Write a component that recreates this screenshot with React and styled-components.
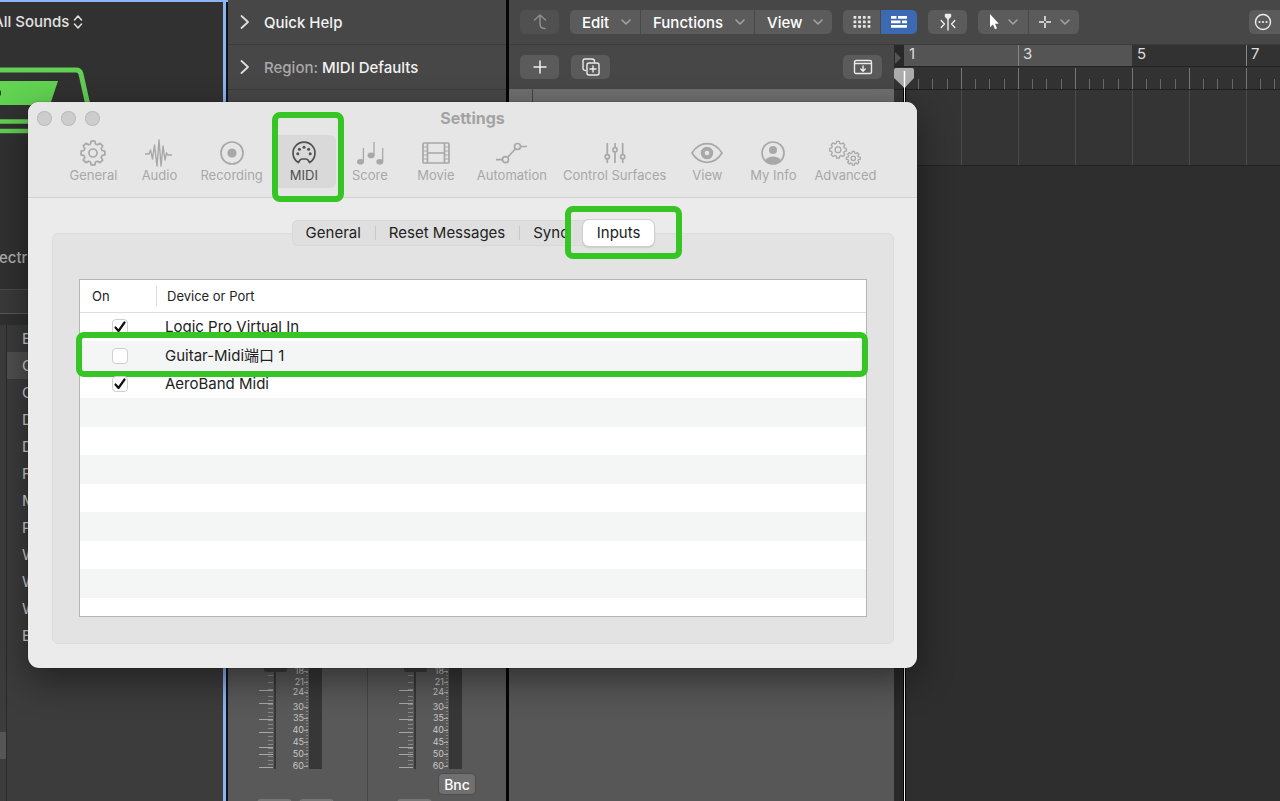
import { useState } from "react";
import styled, { createGlobalStyle, css } from "styled-components";

const GlobalStyle = createGlobalStyle`
  * {
    box-sizing: border-box;
  }
  body {
    margin: 0;
    background: #2e2e2e;
    font-family: Inter, "Liberation Sans", "Noto Sans CJK SC", sans-serif;
  }
  button {
    font-family: inherit;
    border: 0;
    padding: 0;
    margin: 0;
  }
`;

const GREEN = "#37c526";

//outline of a gear around cx, cy
function gearPath(cx, cy, outer, inner) {
  const teeth = 8;
  const step = (Math.PI * 2) / teeth;
  const shape = [
    [-0.34, inner],
    [-0.2, outer],
    [0.2, outer],
    [0.34, inner],
  ];
  const points = [];
  for (let i = 0; i < teeth; i++) {
    shape.forEach(([offset, r]) => {
      const a = i * step - Math.PI / 2 + offset * step;
      points.push(
        `${(cx + Math.cos(a) * r).toFixed(2)} ${(cy + Math.sin(a) * r).toFixed(2)}`
      );
    });
  }
  return `M${points.join("L")}Z`;
}

const icons = {
  General: (
    <>
      <path d={gearPath(16, 14, 12, 9.4)} />
      <circle cx="16" cy="14" r="4" />
    </>
  ),
  Audio: (
    <path
      strokeWidth="1.4"
      d="M2 15h4l1.500-4 2 9 2-14 2.500 21 2-26 2 26 2-20 2 14 1.500-7 1.500 2h4"
    />
  ),
  Recording: (
    <>
      <circle cx="16" cy="14" r="11" />
      <circle cx="16" cy="14" r="4.6" fill="currentColor" stroke="none" />
    </>
  ),
  MIDI: (
    <>
      <path d="M10.4 23.6A11 11 0 1 1 21.6 23.6L20.2 21.2Q19.4 20 18 20H14Q12.6 20 11.8 21.2Z" />
      <g fill="currentColor" stroke="none">
        <circle cx="9.8" cy="14.8" r="1.5" />
        <circle cx="11.4" cy="10.3" r="1.5" />
        <circle cx="16" cy="8.3" r="1.5" />
        <circle cx="20.6" cy="10.3" r="1.5" />
        <circle cx="22.2" cy="14.8" r="1.5" />
      </g>
    </>
  ),
  Score: (
    <>
      <path strokeWidth="1.3" d="M9.4 9v13.5M20 3v13M28.7 9v13.5" />
      <g fill="currentColor" stroke="none">
        <ellipse cx="6.5" cy="22.8" rx="3.5" ry="2.8" />
        <ellipse cx="17.1" cy="16.4" rx="3.5" ry="2.8" />
        <ellipse cx="25.8" cy="22.8" rx="3.5" ry="2.8" />
      </g>
    </>
  ),
  Movie: (
    <>
      <rect x="3" y="4" width="26" height="20" rx="1" />
      <path d="M7.5 4v20M24.5 4v20M7.5 14h17" />
      <path
        strokeWidth="1.1"
        d="M3 8h4.5M3 12h4.5M3 16h4.5M3 20h4.5M24.5 8H29M24.5 12H29M24.5 16H29M24.5 20H29"
      />
    </>
  ),
  Automation: (
    <>
      <circle cx="9.5" cy="20.7" r="3" />
      <circle cx="21.5" cy="7.5" r="3" />
      <path d="M0 20.7h6.5M11.5 18.5l8-8.8M24.5 7.5H31" />
    </>
  ),
  "Control Surfaces": (
    <>
      <path d="M8.3 4v11.5M8.3 20v4M16 4v4.5M16 13v11M23.7 4v11.5M23.7 20v4" />
      <circle cx="8.3" cy="17.7" r="2.1" />
      <circle cx="16" cy="10.7" r="2.1" />
      <circle cx="23.7" cy="17.7" r="2.1" />
    </>
  ),
  View: (
    <>
      <path d="M1 14C5 7.6 10 4.7 16 4.7S27 7.6 31 14C27 20.4 22 23.3 16 23.3S5 20.4 1 14Z" />
      <circle cx="16" cy="14" r="4.3" strokeWidth="4" />
    </>
  ),
  "My Info": (
    <>
      <circle cx="16" cy="14" r="11" />
      <circle cx="16" cy="11" r="4" fill="currentColor" stroke="none" />
      <path
        d="M8 21.3Q11 17.6 16 17.6T24 21.3Q21 24.8 16 24.8T8 21.3Z"
        fill="currentColor"
        stroke="none"
      />
    </>
  ),
  Advanced: (
    <g strokeWidth="1.3">
      <path d={gearPath(9, 10.7, 8.4, 6.6)} />
      <circle cx="9" cy="10.7" r="2.9" />
      <path d={gearPath(24.3, 19.3, 7, 5.3)} />
      <circle cx="24.3" cy="19.3" r="2.2" />
    </g>
  ),
};

const initialPorts = [
  { id: 1, name: "Logic Pro Virtual In", on: true },
  { id: 2, name: "Guitar-Midi端口 1", on: false, marked: true },
  { id: 3, name: "AeroBand Midi", on: true },
];
const emptyRows = [4, 5, 6, 7, 8, 9, 10, 11];
const tabs = ["General", "Reset Messages", "Sync", "Inputs"];
const patches = ["E", "C", "C", "D", "D", "F", "M", "P", "W", "W", "W", "E"];

function Chevron() {
  return (
    <svg width="10" height="6" viewBox="0 0 10 6" fill="none" stroke="#a2a2a2" strokeWidth="1.6" strokeLinecap="round" strokeLinejoin="round">
      <path d="M1 1l4 4 4-4" />
    </svg>
  );
}

function Disclosure() {
  return (
    <svg width="10" height="14" viewBox="0 0 10 14" fill="none" stroke="#dedede" strokeWidth="1.8" strokeLinecap="round" strokeLinejoin="round">
      <path d="M1.5 1l6.5 6-6.5 6" />
    </svg>
  );
}

function Library() {
  return (
    <StyledLibrary>
      <StyledSounds>
        All Sounds
        <svg width="10" height="14" viewBox="0 0 10 14" fill="none" stroke="#e0e0e0" strokeWidth="1.5" strokeLinecap="round" strokeLinejoin="round">
          <path d="M1.5 5L5 1l3.5 4M1.5 9L5 13l3.5-4" />
        </svg>
      </StyledSounds>
      <svg width="100" height="100" viewBox="0 0 100 100">
        <path d="M0 29H76q4 0 5 4L95 96" fill="none" stroke="#62cf55" strokeWidth="5" />
        <path d="M0 40H58L50 64H0Z" fill="#62d352" />
        <circle cx="-3" cy="52" r="4" fill="#123a10" />
        <path d="M0 80.500H90M0 90H90" stroke="#62cf55" strokeWidth="4.5" />
      </svg>
      <StyledPatchName>ectri</StyledPatchName>
      <StyledLibraryBar />
      <StyledLists>
        <StyledLeftList>
          <StyledLeftSelected />
        </StyledLeftList>
        <StyledPatches>
          {patches.map((patch, i) => (
            <StyledPatch key={i} $selected={i === 1}>
              {patch}
            </StyledPatch>
          ))}
        </StyledPatches>
      </StyledLists>
    </StyledLibrary>
  );
}

const meterLabels = [
  [18, 11],
  [21, 22],
  [24, 32],
  [30, 47],
  [35, 58],
  [40, 70],
  [45, 82],
  [50, 94],
  [60, 106],
];
const faderTicks = [30, 43, 59, 72, 87, 94, 107];

//fader scale and level meter of one channel
function Fader() {
  const minor = [];
  for (let y = 15; y < 107; y += y < 30 ? 7 : 4) minor.push(y);
  const fine = [];
  for (let y = 12; y < 108; y += 3) fine.push(y);
  return (
    <svg width="138" height="110" viewBox="0 0 138 110">
      <g stroke="#a8a8a8" strokeWidth="1">
        {faderTicks.map((y) => (
          <path key={y} d={`M31 ${y + 0.5}h14`} />
        ))}
        {minor.map((y) => (
          <path key={y} d={`M40 ${y + 0.5}h5`} opacity="0.6" />
        ))}
        {fine.map((y) => (
          <path key={y} d={`M78 ${y + 0.5}h2`} opacity="0.6" />
        ))}
        {meterLabels.map(([label, y]) => (
          <path key={label} d={`M76 ${y + 0.5}h4`} />
        ))}
      </g>
      <rect x="46" y="0" width="2" height="109" fill="#383838" />
      <rect x="36" y="0" width="23" height="12" rx="2" fill="#3c3c3c" />
      <rect x="81" y="0" width="13" height="109" fill="#373737" />
      <g fill="#c6c6c6" fontSize="9" textAnchor="end">
        {meterLabels.map(([label, y]) => (
          <text key={label} x="76" y={y + 3}>
            {label}
          </text>
        ))}
      </g>
    </svg>
  );
}

function Inspector() {
  return (
    <StyledInspector>
      <StyledInspectorRow>
        <Disclosure />
        <span>Quick Help</span>
      </StyledInspectorRow>
      <StyledInspectorRow>
        <Disclosure />
        <span>
          <StyledMuted>Region:</StyledMuted> MIDI Defaults
        </span>
      </StyledInspectorRow>
      <StyledStrips>
        <StyledStrip>
          <Fader />
          <StyledBounceRow />
          <StyledStripButtons>
            <StyledStripButton aria-label="Mute" />
            <StyledStripButton aria-label="Solo" />
          </StyledStripButtons>
        </StyledStrip>
        <StyledStrip>
          <Fader />
          <StyledBounceRow>
            <StyledBounce>Bnc</StyledBounce>
          </StyledBounceRow>
          <StyledStripButtons>
            <StyledStripButton aria-label="Mute" />
          </StyledStripButtons>
        </StyledStrip>
      </StyledStrips>
    </StyledInspector>
  );
}

function TracksToolbar() {
  return (
    <StyledToolbar>
      <StyledTool aria-label="Back" $dim>
        <svg width="16" height="18" viewBox="0 0 16 18" fill="none" stroke="#8d8d8d" strokeWidth="1.5" strokeLinecap="round" strokeLinejoin="round">
          <path d="M2.5 7L8 2l5.500 5M8 2v9q0 4.500 5 4.500" />
        </svg>
      </StyledTool>
      <StyledToolGroup>
        <StyledMenuButton $width={70}>Edit<Chevron /></StyledMenuButton>
        <StyledMenuButton $width={113}>Functions<Chevron /></StyledMenuButton>
        <StyledMenuButton $width={77}>View<Chevron /></StyledMenuButton>
      </StyledToolGroup>
      <StyledToolGroup>
        <StyledTool $width={37} aria-label="Live loops">
          <svg width="18" height="14" viewBox="0 0 18 14" fill="#e6e6e6">
            {[0, 1, 2].map((row) =>
              [0, 1, 2, 3].map((col) => (
                <rect key={`${row}-${col}`} x={0.5 + col * 4.7} y={1 + row * 4.5} width="2.800" height="2.800" rx="0.500" />
              ))
            )}
          </svg>
        </StyledTool>
        <StyledTool $width={36} $active aria-label="Tracks view">
          <svg width="18" height="14" viewBox="0 0 18 14" fill="#fff">
            <path d="M1 1h5.500v2.800H1zM8 1h9v2.800H8zM1 5.500h9.500v2.800H1zM12 5.500h5v2.800h-5zM1 10h16v2.800H1z" />
          </svg>
        </StyledTool>
      </StyledToolGroup>
      <StyledTool aria-label="Catch playhead">
        <svg width="16" height="18" viewBox="0 0 16 18" fill="none" stroke="#ececec" strokeWidth="1.400" strokeLinecap="round" strokeLinejoin="round">
          <path d="M1.200 7.500l3.200 3.500-3.200 3.500M14.800 7.500L11.600 11l3.200 3.500M8 4v13" />
          <path d="M5.500 1.500h5v2L8 6 5.500 3.500z" fill="#ececec" />
        </svg>
      </StyledTool>
      <StyledToolGroup>
        <StyledTool $width={50} aria-label="Pointer tool">
          <svg width="12" height="18" viewBox="0 0 12 18">
            <path d="M2 1v13.200l3-2.700 2 4.700 2-.9-2-4.500h3.800z" fill="#fff" />
          </svg>
          <Chevron />
        </StyledTool>
        <StyledTool $width={50} aria-label="Marquee tool">
          <svg width="14" height="14" viewBox="0 0 14 14" stroke="#f0f0f0" strokeWidth="1.500">
            <path d="M7 1v5M7 8v5M1 7h5M8 7h5" />
          </svg>
          <Chevron />
        </StyledTool>
      </StyledToolGroup>
      <StyledMore aria-label="More">
        <svg width="18" height="18" viewBox="0 0 18 18" fill="none" stroke="#ececec" strokeWidth="1.400">
          <circle cx="9" cy="9" r="7.500" />
          <g fill="#ececec" stroke="none">
            <circle cx="5.500" cy="9" r="1.100" />
            <circle cx="9" cy="9" r="1.100" />
            <circle cx="12.500" cy="9" r="1.100" />
          </g>
        </svg>
      </StyledMore>
    </StyledToolbar>
  );
}

const barLines = [67, 124, 181, 238, 295, 352, 409, 466];

//bar and beat ticks under the bar numbers
function Beats() {
  return (
    <svg width="480" height="22" viewBox="0 0 480 22" stroke="#777">
      {[10, ...barLines].map((x) => (
        <g key={x}>
          {x > 10 && <path d={`M${x + 0.5} 1v21`} />}
          <path d={`M${x + 14.5} 12v10M${x + 28.5} 12v10M${x + 43.5} 12v10`} opacity="0.8" />
        </g>
      ))}
    </svg>
  );
}

function Tracks() {
  return (
    <StyledTracks>
      <TracksToolbar />
      <StyledTracksBody>
        <StyledHeaders>
          <StyledHeaderTools>
            <StyledTool aria-label="Add track">
              <svg width="16" height="16" viewBox="0 0 16 16" stroke="#f2f2f2" strokeWidth="1.500" strokeLinecap="round">
                <path d="M8 2v12M2 8h12" />
              </svg>
            </StyledTool>
            <StyledTool aria-label="Duplicate track">
              <svg width="18" height="18" viewBox="0 0 18 18" fill="none" stroke="#ececec" strokeWidth="1.400" strokeLinecap="round">
                <rect x="5" y="5" width="12" height="12" rx="2" />
                <path d="M3.500 12.500Q1 12.500 1 10V3Q1 1 3 1h7q2.500 0 2.500 2.500M11 8v6M8 11h6" />
              </svg>
            </StyledTool>
            <StyledPushed>
              <StyledTool aria-label="Global tracks">
                <svg width="20" height="16" viewBox="0 0 20 16" fill="none" stroke="#ececec" strokeWidth="1.400" strokeLinecap="round">
                  <rect x="1.500" y="1.500" width="17" height="13" rx="1.500" />
                  <path d="M2 4.500h16M10 7v5M7.800 10l2.200 2.200 2.200-2.200" />
                </svg>
              </StyledTool>
            </StyledPushed>
          </StyledHeaderTools>
          <StyledHeaderTop />
        </StyledHeaders>
        <StyledTimeline>
          <StyledNumbers>
            <StyledGutter>
              <svg width="8" height="12" viewBox="0 0 8 12">
                <path d="M1 0l6 6-6 6z" fill="#555" />
              </svg>
            </StyledGutter>
            <StyledBar $cycle>1</StyledBar>
            <StyledBar $cycle $line>3</StyledBar>
            <StyledBar>5</StyledBar>
            <StyledBar $line>7</StyledBar>
            <StyledBar />
          </StyledNumbers>
          <StyledBeats>
            <Beats />
          </StyledBeats>
          <StyledLane>
            <svg width="480" height="75" viewBox="0 0 480 75" stroke="#4b4b4b">
              {barLines.map((x) => (
                <path key={x} d={`M${x + 0.5} 0v75`} />
              ))}
            </svg>
          </StyledLane>
          <StyledPlayhead>
            <svg width="20" height="20" viewBox="0 0 20 20">
              <path d="M2 0h16q2 0 2 2v8L10.500 20 0 10V2q0-2 2-2z" fill="#acacac" />
              <path d="M10.500 3v17" stroke="#fff" strokeWidth="1.500" />
            </svg>
          </StyledPlayhead>
        </StyledTimeline>
      </StyledTracksBody>
    </StyledTracks>
  );
}

function PortsTable() {
  const [ports, setPorts] = useState(initialPorts);

  function toggle(id) {
    setPorts(ports.map((p) => (p.id === id ? { ...p, on: !p.on } : p)));
  }

  return (
    <StyledTable>
      <thead>
        <tr>
          <StyledTh $on>On</StyledTh>
          <StyledTh>Device or Port</StyledTh>
        </tr>
      </thead>
      <tbody>
        {ports.map((port) => (
          <StyledRow key={port.id}>
            <StyledTd>
              <StyledCheck>
                <input
                  type="checkbox"
                  id={`port-${port.id}`}
                  checked={port.on}
                  onChange={() => toggle(port.id)}
                />
                {port.on && (
                  <svg width="16" height="16" viewBox="0 0 16 16" fill="none" stroke="#111" strokeWidth="2.200" strokeLinecap="round" strokeLinejoin="round">
                    <path d="M3.500 8.500l3 3.500 6-8.500" />
                  </svg>
                )}
              </StyledCheck>
            </StyledTd>
            <StyledTd $marked={port.marked}>
              <label htmlFor={`port-${port.id}`}>{port.name}</label>
            </StyledTd>
          </StyledRow>
        ))}
        {emptyRows.map((n) => (
          <StyledRow key={n} $short={n === 11}>
            <StyledTd />
            <StyledTd />
          </StyledRow>
        ))}
      </tbody>
    </StyledTable>
  );
}

function SettingsWindow() {
  const [pane, setPane] = useState("MIDI");
  const [tab, setTab] = useState("Inputs");
  return (
    <StyledWindow>
      <StyledTitleBar>
        <StyledLights>
          <StyledLight aria-label="Close" />
          <StyledLight aria-label="Minimize" />
          <StyledLight aria-label="Zoom" />
        </StyledLights>
        <StyledTitle>Settings</StyledTitle>
      </StyledTitleBar>
      <StyledPanes>
        {Object.keys(icons).map((name) => (
          <StyledPane
            key={name}
            $active={name === pane}
            $marked={name === "MIDI"}
            onClick={() => setPane(name)}
          >
            <svg width="32" height="28" viewBox="0 0 32 28" fill="none" stroke="currentColor" strokeWidth="1.700" strokeLinejoin="round">
              {icons[name]}
            </svg>
            {name}
          </StyledPane>
        ))}
      </StyledPanes>
      <StyledContent>
        <StyledTabs>
          {tabs.map((name) => (
            <StyledTab
              key={name}
              $active={name === tab}
              $marked={name === "Inputs"}
              onClick={() => setTab(name)}
            >
              {name}
            </StyledTab>
          ))}
        </StyledTabs>
        <StyledGroup>
          <PortsTable />
        </StyledGroup>
      </StyledContent>
    </StyledWindow>
  );
}

export default function App() {
  return (
    <>
      <GlobalStyle />
      <StyledDesktop>
        <Library />
        <Inspector />
        <Tracks />
        <SettingsWindow />
      </StyledDesktop>
    </>
  );
}

const StyledDesktop = styled.main`
  position: relative;
  display: grid;
  grid-template-columns: 228px 281px minmax(0, 1fr);
  min-height: 100vh;
  overflow: hidden;
`;

//library
const StyledLibrary = styled.section`
  display: flex;
  flex-direction: column;
  background: #313131;
  border-top: 2px solid #8db4f5;
  box-shadow: inset -2px 0 #0b1320, inset -5px 0 #8fb3ea;
  padding-right: 5px;
  overflow: hidden;
`;

const StyledSounds = styled.div`
  display: flex;
  align-items: center;
  gap: 4px;
  height: 39px;
  margin-left: -7px;
  font-size: 15px;
  font-weight: 500;
  color: #e2e2e2;
`;

const StyledPatchName = styled.div`
  height: 148px;
  padding-top: 107px;
  margin-left: -1px;
  font-size: 15px;
  font-weight: 500;
  line-height: 20px;
  color: #b0b0b0;
`;

const StyledLibraryBar = styled.div`
  height: 36px;
  background: #3a3a3a;
  border-top: 1px solid #4a4a4a;
  border-bottom: 11px solid #303030;
  box-shadow: inset 0 -1px #5a5a5a;
`;

const StyledLists = styled.div`
  display: flex;
  flex: 1;
  background: #3c3c3c;
`;

const StyledLeftList = styled.div`
  width: 7px;
  border-right: 1px solid #2a2a2a;
  padding-top: 407px;
`;

const StyledLeftSelected = styled.div`
  height: 27px;
  background: #555;
`;

const StyledPatches = styled.ul`
  flex: 1;
  margin: 0;
  padding: 0;
  list-style: none;
`;

const StyledPatch = styled.li`
  padding-left: 15px;
  font-size: 15px;
  line-height: 27px;
  color: #d5d5d5;
  background: ${(props) => (props.$selected ? "#505050" : "none")};
`;

//inspector
const StyledInspector = styled.section`
  display: flex;
  flex-direction: column;
  background: #474747;
  border-right: 3px solid #050505;
`;

const StyledInspectorRow = styled.div`
  display: flex;
  align-items: center;
  gap: 14px;
  height: 45px;
  padding-left: 12px;
  border-bottom: 1px solid #3b3b3b;
  font-size: 15px;
  font-weight: 500;
  color: #f2f2f2;
`;

const StyledMuted = styled.span`
  color: #a9a9a9;
`;

const StyledStrips = styled.div`
  display: flex;
  flex: 1;
  align-items: stretch;
  margin-top: 60px;
  background: #595959;
`;

const StyledStrip = styled.div`
  flex: 1;
  display: flex;
  flex-direction: column;
  justify-content: flex-end;
  & + & {
    border-left: 1px solid #464646;
  }
`;

const StyledBounceRow = styled.div`
  display: flex;
  justify-content: flex-end;
  height: 29px;
  padding: 4px 31px 0 0;
`;

const StyledBounce = styled.button`
  width: 36px;
  height: 20px;
  border-radius: 4px;
  background: #707070;
  box-shadow: 0 0 0 1px #4d4d4d;
  color: #fff;
  font-size: 14px;
  font-weight: 500;
`;

const StyledStripButtons = styled.div`
  display: flex;
  gap: 7px;
  height: 2px;
  padding-left: 29px;
  overflow: hidden;
`;

const StyledStripButton = styled.button`
  width: 35px;
  height: 20px;
  border-radius: 4px;
  background: #757575;
`;

//tracks area
const StyledTracks = styled.section`
  display: flex;
  flex-direction: column;
  min-width: 0;
`;

const StyledToolbar = styled.div`
  display: flex;
  align-items: center;
  gap: 11px;
  height: 45px;
  padding-left: 11px;
  background: #474747;
  border-bottom: 1px solid #3b3b3b;
`;

const StyledTool = styled.button`
  display: flex;
  flex: none;
  align-items: center;
  justify-content: center;
  gap: 8px;
  width: ${(props) => props.$width || 39}px;
  height: 24px;
  border-radius: 5px;
  background: ${(props) => (props.$active ? "#3b6ab3" : "#5b5b5b")};
  ${(props) =>
    props.$dim &&
    css`
      background: #505050;
    `}
`;

const StyledToolGroup = styled.div`
  display: flex;
  flex: none;
  gap: 1px;
  border-radius: 5px;
  background: #484848;
  overflow: hidden;
  > button {
    border-radius: 0;
  }
`;

const StyledMenuButton = styled.button`
  display: flex;
  align-items: center;
  justify-content: space-between;
  width: ${(props) => props.$width}px;
  height: 24px;
  padding: 0 9px 0 12px;
  background: #5b5b5b;
  color: #fff;
  font-size: 15px;
  font-weight: 500;
`;

const StyledMore = styled(StyledTool)`
  width: 31px;
  margin-left: auto;
  justify-content: flex-start;
  padding-left: 5px;
  border-radius: 5px 0 0 5px;
`;

const StyledTracksBody = styled.div`
  display: flex;
  flex: 1;
`;

const StyledHeaders = styled.div`
  width: 385px;
  flex: none;
  background: #575757;
`;

const StyledHeaderTools = styled.div`
  display: flex;
  align-items: center;
  gap: 12px;
  height: 44px;
  padding: 0 12px 0 11px;
  background: #474747;
`;

const StyledPushed = styled.div`
  margin-left: auto;
`;

const StyledHeaderTop = styled.div`
  height: 75px;
  margin-left: 23px;
  background: #6f6f6f;
  border-left: 1px solid #444;
  box-shadow: -23px 0 #6f6f6f;
`;

const StyledTimeline = styled.div`
  position: relative;
  flex: 1;
  min-width: 0;
  overflow: hidden;
  background: #2e2e2e;
  box-shadow: inset 10px 0 #282828;
`;

const StyledNumbers = styled.div`
  display: flex;
  height: 22px;
  border-bottom: 1px solid #222;
  background: #323232;
`;

const StyledGutter = styled.div`
  flex: none;
  width: 10px;
  padding-top: 3px;
  background: #282828;
`;

const StyledBar = styled.div`
  flex: none;
  width: 114px;
  padding-left: 4px;
  font-size: 15px;
  line-height: 18px;
  color: #dedede;
  background: ${(props) => (props.$cycle ? "#545454" : "#323232")};
  border-left: 1px solid ${(props) => (props.$line ? "#858585" : "transparent")};
`;

const StyledBeats = styled.div`
  height: 23px;
  background: #323232;
  border-bottom: 1px solid #1f1f1f;
`;

const StyledLane = styled.div`
  height: 76px;
  background: #343434;
  border-bottom: 1px solid #232323;
`;

const StyledPlayhead = styled.div`
  position: absolute;
  top: 23px;
  bottom: 0;
  left: 0;
  background: linear-gradient(#f4f4f4, #f4f4f4) 10px 18px / 1px 100% no-repeat,
    linear-gradient(#000, #000) 9px 18px / 3px 100% no-repeat;
`;

//settings window
const StyledWindow = styled.section`
  position: absolute;
  top: 102px;
  left: 28px;
  right: 363px;
  min-width: 850px;
  border-radius: 11px;
  background: #ebebeb;
  box-shadow: 0 0 1px #000, 0 12px 36px rgba(0, 0, 0, 0.45);
`;

const StyledTitleBar = styled.header`
  display: grid;
  grid-template-columns: 1fr auto 1fr;
  align-items: center;
  height: 32px;
  border-radius: 11px 11px 0 0;
  background: #e6e6e6;
`;

const StyledLights = styled.div`
  display: flex;
  gap: 9px;
  padding-left: 9px;
`;

const StyledLight = styled.button`
  width: 15px;
  height: 15px;
  border-radius: 50%;
  background: #cdcdcd;
  box-shadow: inset 0 0 0 1px #bdbdbd;
`;

const StyledTitle = styled.h1`
  margin: 0;
  font-size: 16px;
  font-weight: 700;
  line-height: 20px;
  color: #a3a3a3;
`;

const StyledPanes = styled.nav`
  display: flex;
  justify-content: center;
  gap: 2px;
  height: 64px;
  padding-top: 1px;
  background: #e6e6e6;
  border-bottom: 1px solid #d2d2d2;
`;

//ring drawn around a control
const marker = css`
  position: absolute;
  content: "";
  border: 6px solid ${GREEN};
  border-radius: 8px;
  pointer-events: none;
`;

const StyledPane = styled.button`
  position: relative;
  display: flex;
  flex-direction: column;
  align-items: center;
  min-width: 64px;
  height: 53px;
  padding: 4px 7px 0;
  border-radius: 6px;
  background: ${(props) => (props.$active ? "#d9d9d9" : "none")};
  color: ${(props) => (props.$active ? "#505050" : "#a8a8a8")};
  font-size: 13px;
  line-height: 17px;
  white-space: nowrap;
  ${(props) =>
    props.$marked &&
    css`
      &::after {
        ${marker}
        top: -23px;
        right: -8px;
        bottom: -14px;
        left: 0;
      }
    `}
`;

const StyledContent = styled.div`
  display: flex;
  flex-direction: column;
  align-items: center;
  padding: 22px 23px 24px 24px;
`;

const StyledTabs = styled.div`
  position: relative;
  z-index: 1;
  display: flex;
  margin-bottom: -13px;
  border-radius: 6px;
  background: #dfdfdf;
  box-shadow: inset 0 0 0 1px #d8d8d8;
`;

const StyledTab = styled.button`
  position: relative;
  height: 26px;
  padding: 0 14px;
  border-radius: 6px;
  background: none;
  color: #222;
  font-size: 15px;
  line-height: 26px;
  & + &::before {
    position: absolute;
    top: 6px;
    bottom: 6px;
    left: 0;
    width: 1px;
    background: #c8c8c8;
    content: "";
  }
  ${(props) =>
    props.$active &&
    css`
      background: #fff;
      box-shadow: 0 0 0 1px #cfcfcf, 0 1px 2px rgba(0, 0, 0, 0.3);
      & + &::before,
      &&::before {
        display: none;
      }
    `}
  ${(props) =>
    props.$marked &&
    css`
      &::after {
        ${marker}
        top: -14px;
        right: -28px;
        bottom: -13px;
        left: -18px;
      }
    `}
`;

const StyledGroup = styled.div`
  width: 100%;
  padding: 45px 26px 26px;
  border: 1px solid #dcdcdc;
  border-radius: 6px;
  background: #e3e3e3;
`;

const StyledTable = styled.table`
  width: 100%;
  border: 1px solid #b5b5b5;
  border-spacing: 0;
  background: #fff;
  table-layout: fixed;
  color: #222;
`;

const StyledTh = styled.th`
  width: ${(props) => (props.$on ? "77px" : "auto")};
  height: 33px;
  padding: 0 0 0 ${(props) => (props.$on ? 12 : 10)}px;
  border-bottom: 1px solid #dedede;
  background: ${(props) =>
    props.$on
      ? "linear-gradient(#dcdcdc, #dcdcdc) right center / 1px 20px no-repeat"
      : "none"};
  font-size: 13px;
  font-weight: 400;
  text-align: left;
`;

const StyledRow = styled.tr`
  position: relative;
  height: ${(props) => (props.$short ? 18 : 28)}px;
  font-size: 15px;
  line-height: 20px;
  &:nth-child(even) {
    height: 29px;
    background: #f4f6f5;
  }
`;

const StyledTd = styled.td`
  padding: 0 0 0 8px;
  &:first-child {
    padding-left: 32px;
  }
  ${(props) =>
    props.$marked &&
    css`
      &::after {
        ${marker}
        top: -9px;
        right: -2px;
        bottom: -7px;
        left: -4px;
      }
    `}
`;

const StyledCheck = styled.span`
  position: relative;
  display: block;
  width: 16px;
  height: 16px;
  input {
    display: block;
    width: 16px;
    height: 16px;
    margin: 0;
    appearance: none;
    border: 1px solid #cfcfcf;
    border-radius: 4px;
    background: #fff;
  }
  svg {
    position: absolute;
    inset: 0;
    pointer-events: none;
  }
`;
